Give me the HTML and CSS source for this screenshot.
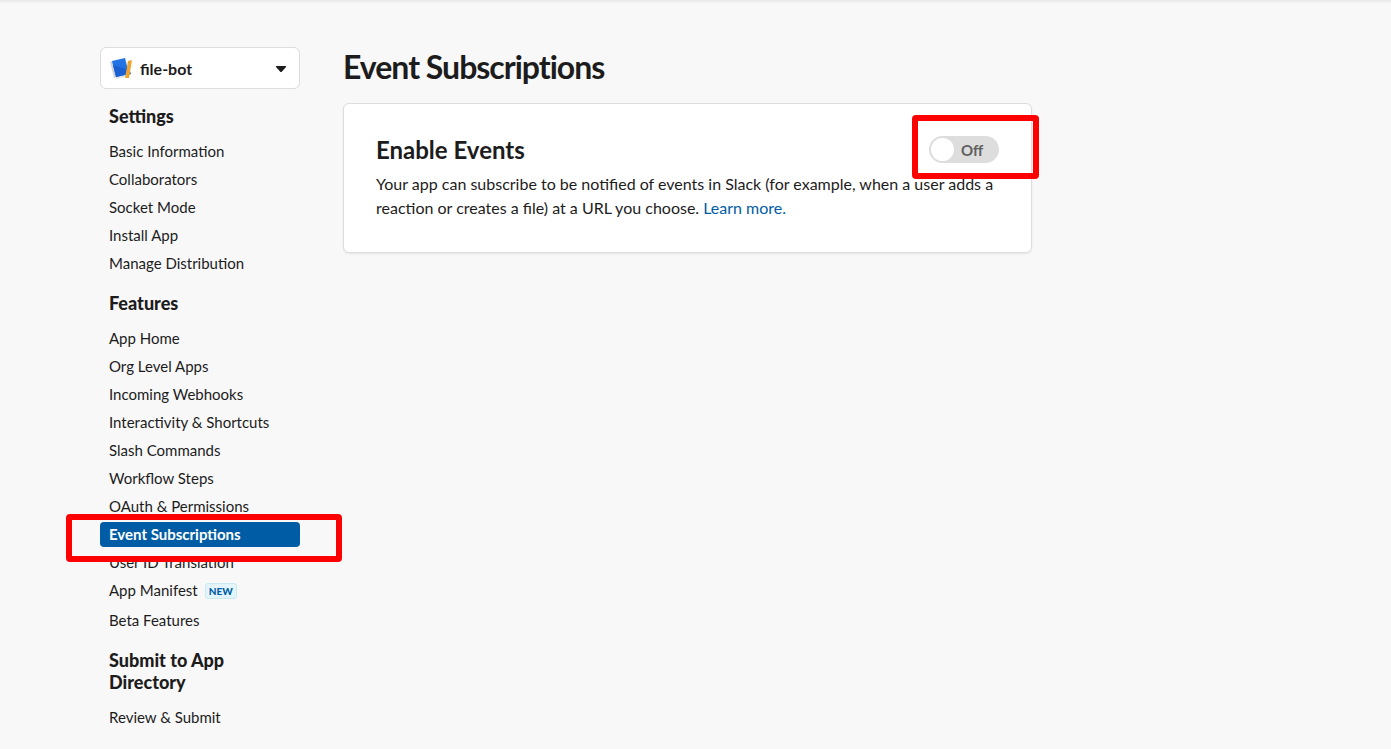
FILE: index.html
```html
<!DOCTYPE html>
<html lang="en">
<head>
<meta charset="utf-8">
<title>Event Subscriptions</title>
<link rel="stylesheet" href="styles.css">
</head>
<body>
<div class="page">
  <aside class="sidebar">
    <button class="app-picker" type="button">
      <svg class="app-icon" viewBox="0 0 22 22" aria-hidden="true">
        <path d="M0 5 3 4 6 20 4 21Z" fill="#d3d6d9"/>
        <path d="M5 20 17 17 19 16 18 19 6 22Z" fill="#dfe2e4"/>
        <path d="M2 4 15 1 19 17 6 20Z" fill="#2273e3"/>
        <path d="M3 8 16 12 18 9 19 17 6 20Z" fill="#1b60d2"/>
        <path d="M18 15 20 14 21 17 18 18Z" fill="#4d6384"/>
        <path d="M18 4 22 3 19 21 15 21Z" fill="#eba434"/>
      </svg>
      <span class="app-name">file-bot</span>
      <svg class="caret" viewBox="0 0 12 8" aria-hidden="true"><path d="M1.500 2H10.500Q11.500 2 11 3L7 7.500Q6 8.500 5 7.500L1 3Q.5 2 1.500 2Z" fill="#1d1c1d"/></svg>
    </button>
    <nav class="nav">
      <h2 class="nav-title">Settings</h2>
      <ul class="nav-list">
        <li><a class="nav-link" href="#">Basic Information</a></li>
        <li><a class="nav-link" href="#">Collaborators</a></li>
        <li><a class="nav-link" href="#">Socket Mode</a></li>
        <li><a class="nav-link" href="#">Install App</a></li>
        <li><a class="nav-link" href="#">Manage Distribution</a></li>
      </ul>
      <h2 class="nav-title">Features</h2>
      <ul class="nav-list">
        <li><a class="nav-link" href="#">App Home</a></li>
        <li><a class="nav-link" href="#">Org Level Apps</a></li>
        <li><a class="nav-link" href="#">Incoming Webhooks</a></li>
        <li><a class="nav-link" href="#">Interactivity &amp; Shortcuts</a></li>
        <li><a class="nav-link" href="#">Slash Commands</a></li>
        <li><a class="nav-link" href="#">Workflow Steps</a></li>
        <li><a class="nav-link" href="#">OAuth &amp; Permissions</a></li>
        <li class="marked"><a class="nav-link active" href="#" aria-current="page">Event Subscriptions</a><span class="highlight highlight-nav"></span></li>
        <li><a class="nav-link" href="#">User ID Translation</a></li>
        <li><a class="nav-link with-badge" href="#">App Manifest <span class="badge">NEW</span></a></li>
        <li><a class="nav-link" href="#">Beta Features</a></li>
      </ul>
      <h2 class="nav-title">Submit to App Directory</h2>
      <ul class="nav-list">
        <li><a class="nav-link" href="#">Review &amp; Submit</a></li>
      </ul>
    </nav>
  </aside>
  <main class="main">
    <h1 class="title">Event Subscriptions</h1>
    <section class="card">
      <div class="card-head">
        <h2 class="card-title" id="enable-events">Enable Events</h2>
        <div class="marked">
          <button class="toggle" type="button" role="switch" aria-checked="false" aria-labelledby="enable-events"><span class="knob"></span><span class="toggle-text">Off</span></button>
          <span class="highlight highlight-toggle"></span>
        </div>
      </div>
      <p class="card-text">Your app can subscribe to be notified of events in Slack (for example, when a user adds a reaction or creates a file) at a URL you choose. <a class="link" href="#">Learn more.</a></p>
    </section>
  </main>
</div>
</body>
</html>
```

FILE: styles.css
```css
* {
  box-sizing: border-box;
}

body {
  margin: 0;
  min-height: 100vh;
  background: #f8f8f8 linear-gradient(#e8e8e8, #f8f8f8) 0 0 / 100% 4px no-repeat;
  color: #1d1c1d;
  font-family: Lato, sans-serif;
  font-size: 15px;
}

.page {
  display: flex;
  align-items: flex-start;
  gap: 43px;
  max-width: 1132px;
  padding: 47px 100px 16px;
}

.sidebar {
  flex: 0 0 200px;
}

.app-picker {
  display: flex;
  align-items: center;
  gap: 8px;
  width: 100%;
  height: 42px;
  padding: 0 12px 0 9px;
  border: 1px solid #ddd;
  border-radius: 6px;
  background: #fff;
  color: inherit;
  font: bold 16px Lato, sans-serif;
  text-align: left;
}

.app-icon {
  width: 22px;
  height: 22px;
}

.app-name {
  flex: 1;
}

.caret {
  width: 12px;
  height: 8px;
}

.nav-title {
  margin: 16px 9px 12px;
  font-size: 18px;
  font-weight: 900;
  line-height: 22px;
}

.nav-list {
  display: flex;
  flex-direction: column;
  gap: 3px;
  margin: 0;
  padding: 0;
  list-style: none;
}

.nav-link {
  display: block;
  padding: 0 9px;
  border-radius: 4px;
  color: inherit;
  line-height: 25px;
  text-decoration: none;
}

.nav-link.active {
  background: #005da5;
  color: #fff;
  font-weight: bold;
}

.with-badge {
  display: flex;
  align-items: center;
  gap: 7px;
  padding-bottom: 2px;
}

.badge {
  padding: 0 3px;
  border: 1px solid #c8eaf3;
  border-radius: 3px;
  background: #e3f5fa;
  color: #005da5;
  font-size: 10px;
  font-weight: 900;
  line-height: 14px;
}

.marked {
  position: relative;
}

.highlight {
  position: absolute;
  border: 6px solid #f00;
  border-radius: 4px;
  pointer-events: none;
}

.highlight-nav {
  z-index: 1;
  inset: -8px -42px -15px -34px;
}

.highlight-toggle {
  inset: -21px -40px -16px -17px;
}

.main {
  flex: 1;
  min-width: 0;
}

.title {
  margin: 0 0 16px;
  font-size: 32px;
  line-height: 40px;
  letter-spacing: -1px;
}

.card {
  padding: 32px;
  border: 1px solid #ddd;
  border-radius: 6px;
  background: #fff;
  box-shadow: 0 1px 2px rgba(0, 0, 0, 0.08);
}

.card-head {
  display: flex;
  align-items: flex-start;
  justify-content: space-between;
  margin-bottom: 8px;
}

.card-title {
  margin: 0;
  font-size: 24px;
  line-height: 28px;
}

.toggle {
  display: flex;
  align-items: center;
  gap: 7px;
  width: 70px;
  height: 27px;
  padding: 0 2px;
  border: 0;
  border-radius: 14px;
  background: #ddd;
  color: #616061;
  font: bold 15px Lato, sans-serif;
}

.knob {
  width: 23px;
  height: 23px;
  border-radius: 50%;
  background: #fff;
}

.card-text {
  margin: 0;
  font-size: 16px;
  line-height: 24px;
}

.link {
  color: #005da5;
  text-decoration: none;
}
```
